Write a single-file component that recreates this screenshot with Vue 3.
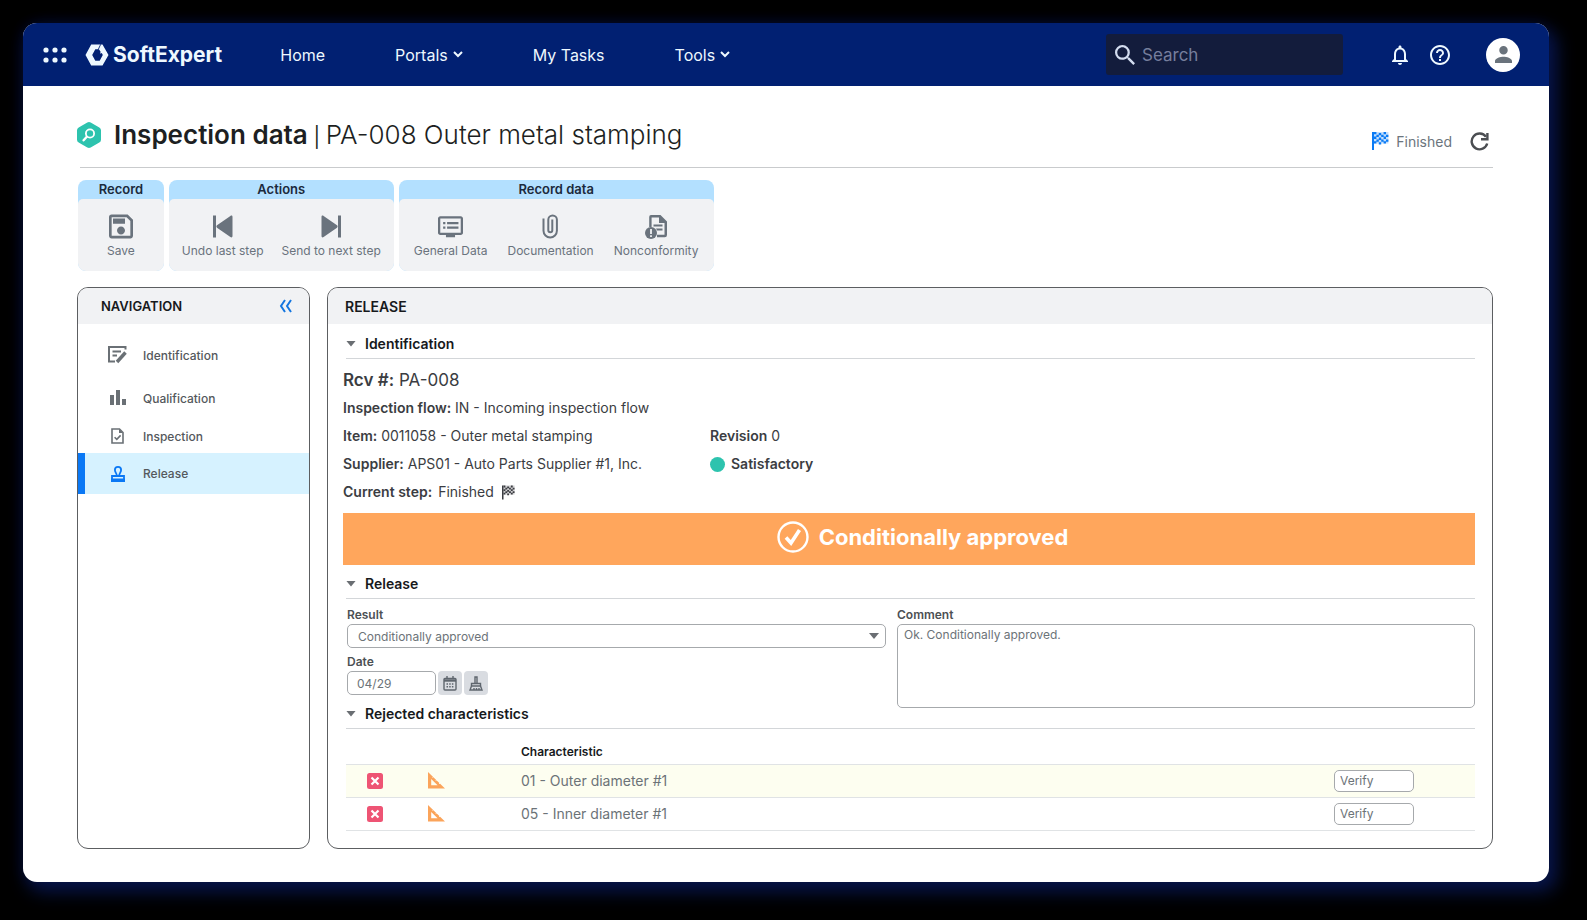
<script setup>
import { ref, reactive } from 'vue'

const result = ref('Conditionally approved')
const date = ref('04/29')
const comment = ref('Ok. Conditionally approved.')
const search = ref('')
const open = reactive({ identification: true, release: true, rejected: true })

const rows = reactive([
  { id: 1, name: '01 - Outer diameter #1', action: 'Verify' },
  { id: 2, name: '05 - Inner diameter #1', action: 'Verify' },
])

// Checkered flag: alternating cells with a small wave from column to column
const wave = [0, 0.5, 1, 0.5, 0, 0.5]
let flagCells = ''
for (let c = 0; c < 6; c++) {
  for (let r = 0; r < 5; r++) {
    if ((c + r) % 2 === 0) flagCells += `M${2 + c * 2.4} ${r * 2.3 + wave[c]}h2.4v2.3h-2.4z`
  }
}
</script>

<template>
  <div class="window">
    <header class="topbar">
      <button class="icon-btn apps" aria-label="Applications">
        <svg width="24" height="16" viewBox="0 0 24 16" fill="currentColor">
          <circle cx="3" cy="3" r="2.6" /><circle cx="12" cy="3" r="2.6" /><circle cx="21" cy="3" r="2.6" />
          <circle cx="3" cy="13" r="2.6" /><circle cx="12" cy="13" r="2.6" /><circle cx="21" cy="13" r="2.6" />
        </svg>
      </button>
      <a class="brand" href="#">
        <svg width="24" height="22" viewBox="0 0 24 22">
          <path fill="currentColor" fill-rule="evenodd" d="M6.200.5h11.300L23.500 11l-6 10.500H6.200L.5 11zM10.300 5.300 7.200 11l3.100 5.700h4.400L17.800 11l-1-2-1.500.8.200-2.300-1.600-2.200z" />
          <path d="M13.200 5.600 15.700.3" stroke="#012072" stroke-width=".9" />
        </svg>
        <span>SoftExpert</span>
      </a>
      <nav class="menu" aria-label="Main">
        <a href="#">Home</a>
        <a href="#">Portals
          <svg width="10" height="7" viewBox="0 0 10 7"><path d="M1 1l4 4 4-4" /></svg>
        </a>
        <a href="#">My Tasks</a>
        <a href="#">Tools
          <svg width="10" height="7" viewBox="0 0 10 7"><path d="M1 1l4 4 4-4" /></svg>
        </a>
      </nav>
      <label class="search">
        <svg width="20" height="20" viewBox="3 3 17.500 17.500" fill="currentColor">
          <path d="M15.500 14h-.79l-.28-.27A6.471 6.471 0 0 0 16 9.500 6.500 6.500 0 1 0 9.500 16c1.610 0 3.090-.59 4.230-1.570l.27.28v.79l5 4.990L20.490 19l-4.990-5zm-6 0C7.010 14 5 11.990 5 9.500S7.010 5 9.500 5 14 7.010 14 9.500 11.990 14 9.500 14z" />
        </svg>
        <input v-model="search" type="text" placeholder="Search" aria-label="Search" />
      </label>
      <button class="icon-btn bell" aria-label="Notifications">
        <svg width="16" height="20" viewBox="4 2 16 20" fill="currentColor">
          <path d="M12 22c1.100 0 2-.9 2-2h-4c0 1.100.9 2 2 2zm6-6v-5c0-3.070-1.630-5.640-4.500-6.320V4c0-.83-.67-1.500-1.500-1.500s-1.500.67-1.500 1.500v.68C7.640 5.360 6 7.920 6 11v5l-2 2v1h16v-1l-2-2zm-2 1H8v-6c0-2.480 1.510-4.500 4-4.500s4 2.020 4 4.500v6z" />
        </svg>
      </button>
      <button class="icon-btn help" aria-label="Help">
        <svg width="20" height="20" viewBox="2 2 20 20" fill="currentColor">
          <path d="M11 18h2v-2h-2v2zm1-16C6.480 2 2 6.480 2 12s4.480 10 10 10 10-4.480 10-10S17.520 2 12 2zm0 18c-4.410 0-8-3.590-8-8s3.590-8 8-8 8 3.590 8 8-3.590 8-8 8zm0-14c-2.210 0-4 1.790-4 4h2c0-1.100.9-2 2-2s2 .9 2 2c0 2-3 1.750-3 5h2c0-2.250 3-2.500 3-5 0-2.210-1.790-4-4-4z" />
        </svg>
      </button>
      <button class="icon-btn avatar" aria-label="Account">
        <svg width="17" height="17" viewBox="4 4 16 16" fill="currentColor">
          <path d="M12 12c2.210 0 4-1.790 4-4s-1.790-4-4-4-4 1.790-4 4 1.790 4 4 4zm0 2c-2.670 0-8 1.340-8 4v2h16v-2c0-2.660-5.330-4-8-4z" />
        </svg>
      </button>
    </header>

    <main class="page">
      <div class="title-row">
        <svg class="title-icon" width="24" height="26" viewBox="0 0 24 26">
          <path d="M10.300.6a3.400 3.400 0 0 1 3.400 0l8.600 4.900A3.300 3.300 0 0 1 24 8.400v9.200a3.300 3.300 0 0 1-1.700 2.900l-8.600 4.900a3.400 3.400 0 0 1-3.400 0l-8.600-4.900A3.300 3.300 0 0 1 0 17.600V8.400a3.300 3.300 0 0 1 1.700-2.900z" fill="#2dc3ae" />
          <circle cx="13" cy="11.500" r="4.100" fill="none" stroke="#fff" stroke-width="1.800" />
          <path d="M9.800 14.800 6.600 18.300" stroke="#fff" stroke-width="2.400" stroke-linecap="round" />
        </svg>
        <h1><b>Inspection data</b><span class="bar"> | </span>PA-008 Outer metal stamping</h1>
        <div class="status">
          <svg class="flag" width="17" height="18" viewBox="0 0 17 18" fill="currentColor">
            <path d="M0 0h2v18H0z" />
            <path d="M2 0h14.400v11.500H2z" opacity=".25" />
            <path :d="flagCells" />
          </svg>
          <span>Finished</span>
          <button class="icon-btn refresh" aria-label="Refresh">
            <svg width="19" height="19" viewBox="0 0 19 19" fill="none" stroke="currentColor" stroke-width="2.400">
              <path d="M16 4.800A7.900 7.900 0 1 0 17.200 11.500" />
              <path d="M17.400 1v6.300H11" />
            </svg>
          </button>
        </div>
      </div>

      <div class="toolbar">
        <section class="tools">
          <h2>Record</h2>
          <div class="tools-body single">
            <button>
              <svg width="24" height="24" viewBox="3 3 18 18" fill="currentColor">
                <path d="M17 3H5a2 2 0 0 0-2 2v14c0 1.100.9 2 2 2h14c1.100 0 2-.9 2-2V7l-4-4zm2 16H5V5h11.170L19 7.830V19zM12 12c-1.660 0-3 1.340-3 3s1.340 3 3 3 3-1.340 3-3-1.340-3-3-3zM6 6h9v4H6z" />
              </svg>
              Save
            </button>
          </div>
        </section>
        <section class="tools">
          <h2>Actions</h2>
          <div class="tools-body">
            <button>
              <svg width="20" height="24" viewBox="0 0 20 24" fill="currentColor">
                <path d="M0 1h3v22H0z" />
                <path d="M17.400 1.500c1-.8 2.100-.4 2.100.9v19.200c0 1.300-1.100 1.700-2.100.9L4 13.200c-.8-.7-.8-1.700 0-2.400z" />
              </svg>
              Undo last step
            </button>
            <button>
              <svg width="20" height="24" viewBox="0 0 20 24" fill="currentColor">
                <path d="M17 1h3v22h-3z" />
                <path d="M2.600 1.500C1.600.7.500 1.100.5 2.400v19.200c0 1.300 1.100 1.700 2.100.9L16 13.200c.8-.7.8-1.700 0-2.400z" />
              </svg>
              Send to next step
            </button>
          </div>
        </section>
        <section class="tools">
          <h2>Record data</h2>
          <div class="tools-body spacious">
            <button>
              <svg width="25" height="24" viewBox="1 1 22 21" fill="currentColor">
                <path d="M21 2.500H3c-1.100 0-2 .9-2 2v12.500c0 1.100.9 2 2 2h5v2h8v-2h5c1.100 0 2-.9 2-2V4.500c0-1.100-.9-2-2-2zM21 17H3V4.500h18zM19 7.500H9v2h10zm0 4H9v2h10zM7.500 7.500h-2v2h2zm0 4h-2v2h2z" />
              </svg>
              General Data
            </button>
            <button>
              <svg width="17" height="24" viewBox="0 0 17 24" fill="none" stroke="currentColor" stroke-width="2">
                <path d="M1.500 4v12.200a6.700 6.700 0 0 0 13.400 0V5.300a4.300 4.300 0 0 0-8.600 0v10.400a2 2 0 0 0 4 0V5" />
              </svg>
              Documentation
            </button>
            <button>
              <svg width="22" height="25" viewBox="0 0 22 25" fill="currentColor">
                <path fill-rule="evenodd" d="M6 1h9.500L22 7.500V21a2.200 2.200 0 0 1-2.200 2.200H12v-2.400h7.500V9H14V3.400H6.600V13H4.200V3A2 2 0 0 1 6 1z" />
                <path d="M8.500 10.500h9v2h-9zM11 14.500h6.500v2H12z" />
                <circle cx="6" cy="19" r="6" />
                <path d="M5.100 15h1.800v5H5.100zM5.100 21.200h1.800v1.800H5.100z" fill="#f1f2f4" />
              </svg>
              Nonconformity
            </button>
          </div>
        </section>
      </div>

      <div class="panels">
        <aside class="panel">
          <div class="panel-head nav-head">
            <h2>NAVIGATION</h2>
            <button class="icon-btn collapse" aria-label="Collapse navigation">
              <svg width="14" height="14" viewBox="0 0 14 14" fill="none" stroke="currentColor" stroke-width="2">
                <path d="M6 1 2 7l4 6M12 1 8 7l4 6" />
              </svg>
            </button>
          </div>
          <ul class="nav-list">
            <li>
              <a href="#">
                <svg width="19" height="18" viewBox="0 0 19 18" fill="none" stroke="currentColor" stroke-width="2">
                  <path d="M1 16.500V1h16.500v2.500M0 15.500h7M4.500 5.500h8.500M4.500 9.500H9" />
                  <path d="M9 16 17.500 6.500" stroke-width="3.400" />
                </svg>
                Identification
              </a>
            </li>
            <li>
              <a href="#">
                <svg width="16" height="16" viewBox="0 0 16 16" fill="currentColor">
                  <path d="M0 5h4v10H0zM6 0h4v15H6zM12 9h4v6h-4z" />
                </svg>
                Qualification
              </a>
            </li>
            <li>
              <a href="#">
                <svg width="13" height="16" viewBox="0 0 13 16" fill="none" stroke="currentColor" stroke-width="1.600">
                  <path d="M1 1h7.500L12 4.500V15H1zM3.600 9.200l2.200 2.200 3.800-4" />
                  <path d="M8 1v4h4z" fill="currentColor" stroke="none" />
                </svg>
                Inspection
              </a>
            </li>
            <li>
              <a href="#" class="active" aria-current="page">
                <svg width="14" height="16" viewBox="0 0 14 16" fill="none" stroke="currentColor" stroke-width="1.800">
                  <path d="M5.800 9.500C5.800 7.400 3.900 6.300 3.900 4a3.100 3.100 0 0 1 6.200 0C10.100 6.300 8.200 7.400 8.200 9.500" />
                  <path d="M1 13V10h12v3" />
                  <path d="M0 12.500h14v3.500H0z" fill="currentColor" stroke="none" />
                </svg>
                Release
              </a>
            </li>
          </ul>
        </aside>

        <section class="panel">
          <div class="panel-head">
            <h2>RELEASE</h2>
          </div>
          <div class="panel-body">
            <h3>
              <button @click="open.identification = !open.identification"><i class="caret"></i>Identification</button>
            </h3>
            <div v-show="open.identification" class="facts">
              <p class="lead"><b>Rcv #:</b> PA-008</p>
              <p class="full"><b>Inspection flow:</b> IN - Incoming inspection flow</p>
              <p><b>Item:</b> 0011058 - Outer metal stamping</p>
              <p><b>Revision</b> 0</p>
              <p><b>Supplier:</b> APS01 - Auto Parts Supplier #1, Inc.</p>
              <p class="with-dot"><i class="dot"></i><b>Satisfactory</b></p>
              <p class="with-flag">
                <b>Current step:</b>
                <span>Finished</span>
                <svg width="13" height="15" viewBox="0 0 17 18" fill="currentColor">
                  <path d="M0 0h2v18H0z" />
                  <path d="M2 0h14.400v11.500H2z" opacity=".25" />
                  <path :d="flagCells" />
                </svg>
              </p>
            </div>

            <div class="banner">
              <svg width="32" height="32" viewBox="0 0 32 32" fill="none" stroke="currentColor">
                <circle cx="16" cy="16" r="14.500" stroke-width="2.400" />
                <path d="M9 16.500 14 22l8.500-13" stroke-width="3.600" />
              </svg>
              <strong>Conditionally approved</strong>
            </div>

            <h3>
              <button @click="open.release = !open.release"><i class="caret"></i>Release</button>
            </h3>
            <form v-show="open.release" class="form" @submit.prevent>
              <div class="left">
                <div class="field">
                  <label for="result">Result</label>
                  <div class="select">
                    <select id="result" v-model="result">
                      <option>Conditionally approved</option>
                      <option>Approved</option>
                      <option>Rejected</option>
                    </select>
                    <i class="caret"></i>
                  </div>
                </div>
                <div class="field">
                  <label for="date">Date</label>
                  <div class="date">
                    <input id="date" v-model="date" type="text" />
                    <button type="button" aria-label="Open calendar">
                      <svg width="14" height="15" viewBox="0 0 14 15" fill="none" stroke="currentColor" stroke-width="1.400">
                        <rect x="1" y="2.500" width="12" height="11.500" rx="1" />
                        <path d="M1 4.500h12" stroke-width="2.400" />
                        <path d="M4 0v3M10 0v3" />
                        <path d="M3.500 8h7M3.500 10.800h7" stroke-dasharray="1.500 1.200" />
                      </svg>
                    </button>
                    <button type="button" aria-label="Clear date">
                      <svg width="14" height="15" viewBox="0 0 14 15" fill="none" stroke="currentColor" stroke-width="1.400">
                        <path d="M6 7V1h2v6M2.500 10V7.500h9V10" />
                        <path d="M2.500 10 1 14h12l-1.500-4zM5 14v-2M7.500 14v-2M10 14v-2" />
                      </svg>
                    </button>
                  </div>
                </div>
              </div>
              <div class="field">
                <label for="comment">Comment</label>
                <textarea id="comment" v-model="comment"></textarea>
              </div>
            </form>

            <h3>
              <button @click="open.rejected = !open.rejected"><i class="caret"></i>Rejected characteristics</button>
            </h3>
            <table v-show="open.rejected">
              <colgroup>
                <col class="c-state" /><col class="c-type" /><col /><col class="c-action" />
              </colgroup>
              <thead>
                <tr>
                  <td></td>
                  <td></td>
                  <th scope="col">Characteristic</th>
                  <td></td>
                </tr>
              </thead>
              <tbody>
                <tr v-for="row in rows" :key="row.id">
                  <td class="state">
                    <svg width="16" height="16" viewBox="0 0 16 16" role="img" aria-label="Rejected">
                      <rect width="16" height="16" rx="2.500" fill="#ee5474" />
                      <path d="M4.500 4.500l7 7M11.500 4.500l-7 7" stroke="#fff" stroke-width="2.200" />
                    </svg>
                  </td>
                  <td>
                    <svg width="18" height="17" viewBox="0 0 18 17" role="img" aria-label="Measured">
                      <path fill="#fba45a" fill-rule="evenodd" d="M1 0 18 16.500H1zM4.200 7v6.300h6.400z" />
                      <path d="M7 4.200 5.600 5.600M10.200 7.400 8.800 8.800M13.400 10.600 12 12" stroke="#fff" stroke-width=".8" />
                    </svg>
                  </td>
                  <td>{{ row.name }}</td>
                  <td><input v-model="row.action" type="text" :aria-label="'Action for ' + row.name" /></td>
                </tr>
              </tbody>
            </table>
          </div>
        </section>
      </div>
    </main>
  </div>
</template>

<style>
body {
  background: #000;
}
</style>

<style scoped>
* {
  box-sizing: border-box;
}

.window {
  display: flex;
  flex-direction: column;
  min-height: calc(100vh - 61px);
  margin: 23px 38px 38px 23px;
  border-radius: 14px;
  background: #fff;
  color: #3b3d42;
  font-family: Inter, "Liberation Sans", sans-serif;
  font-size: 14px;
  box-shadow: 6px 8px 18px 2px #07154a, 0 0 16px #05081f;
  overflow: hidden;
}

h1, h2, h3, p, ul {
  margin: 0;
  padding: 0;
  font-weight: 400;
}

button, input, select, textarea {
  margin: 0;
  padding: 0;
  border: 0;
  background: none;
  color: inherit;
  font: inherit;
}

svg {
  flex: none;
  display: block;
}

a {
  color: inherit;
  text-decoration: none;
}

b {
  font-weight: 600;
}

.icon-btn {
  display: flex;
  align-items: center;
  justify-content: center;
}

/* Top bar */
.topbar {
  display: flex;
  align-items: center;
  height: 63px;
  padding: 0 29px 0 20px;
  background: #012072;
  color: #eef8ff;
}

.brand {
  display: flex;
  align-items: center;
  gap: 4px;
  margin-left: 18px;
  font-size: 21px;
  font-weight: 700;
}

.menu {
  display: flex;
  gap: 70px;
  margin-left: 58px;
  font-size: 16px;
}

.menu a {
  display: flex;
  align-items: center;
  gap: 5px;
  white-space: nowrap;
}

.menu svg {
  fill: none;
  stroke: currentColor;
  stroke-width: 2;
}

.search {
  display: flex;
  align-items: center;
  gap: 7px;
  width: 237px;
  height: 41px;
  margin-left: auto;
  padding: 0 9px;
  border-radius: 3px;
  background: #131c3c;
  color: #d3dcef;
}

.search input {
  flex: 1;
  min-width: 0;
  outline: 0;
  font-size: 17px;
}

.search input::placeholder {
  color: #767e9c;
  opacity: 1;
}

.bell {
  margin-left: 49px;
}

.help {
  margin-left: 22px;
}

.avatar {
  width: 34px;
  height: 34px;
  margin-left: 36px;
  border-radius: 50%;
  background: #fff;
  color: #6a737c;
}

/* Page */
.page {
  flex: 1;
  display: flex;
  flex-direction: column;
  padding: 0 56px 33px 54px;
}

.title-row {
  display: flex;
  align-items: center;
  height: 82px;
  padding-top: 15px;
  background: linear-gradient(#c9cbcd, #c9cbcd) 3px 100% / 100% 1px no-repeat;
}

h1 {
  margin-left: 13px;
  color: #1d1f22;
  font-size: 26px;
  font-weight: 300;
  white-space: nowrap;
}

.bar {
  font-size: 20px;
  font-weight: 400;
}

.status {
  display: flex;
  align-items: center;
  margin-left: auto;
  padding: 13px 4px 0 0;
  color: #6c757d;
  font-size: 14px;
}

.flag {
  margin-right: 7px;
  color: #0a7bf5;
}

.refresh {
  margin-left: 18px;
  color: #4b4e52;
}

.toolbar {
  display: flex;
  gap: 5px;
  padding: 12px 0 16px 1px;
}

.tools {
  border-radius: 8px;
  background: #b3e0ff;
  overflow: hidden;
}

.tools h2 {
  color: #1b2a3c;
  font-size: 13px;
  font-weight: 600;
  line-height: 19px;
  text-align: center;
}

.tools-body {
  display: flex;
  gap: 18px;
  height: 72px;
  padding: 15px 13px 0;
  border-radius: 5px 5px 0 0;
  background: #f1f2f4;
  color: #6a737d;
}

.single {
  padding: 15px 29px 0;
}

.spacious {
  gap: 20px;
  padding: 15px 15px 0;
}

.tools-body button {
  display: flex;
  flex-direction: column;
  align-items: center;
  gap: 4px;
  font-size: 12px;
  line-height: 16px;
  white-space: nowrap;
}

.tools-body svg {
  height: 25px;
}

/* Panels */
.panels {
  flex: 1;
  display: grid;
  grid-template-columns: 233px minmax(0, 1fr);
  gap: 17px;
}

.panel {
  border: 1px solid #5c5e61;
  border-radius: 11px;
  overflow: hidden;
}

.panel-head {
  display: flex;
  align-items: center;
  height: 36px;
  padding: 0 17px;
  background: #f1f2f4;
}

.panel-head h2 {
  color: #17191c;
  font-size: 14px;
  font-weight: 600;
}

.panel-head.nav-head {
  padding: 0 16px 0 23px;
}

.panel-head.nav-head h2 {
  font-size: 13px;
}

.collapse {
  margin-left: auto;
  color: #1677e0;
}

.nav-list {
  display: grid;
  grid-template-rows: 44px 42px 34px 41px;
  padding-top: 9px;
  list-style: none;
}

.nav-list a {
  display: grid;
  grid-template-columns: 19px 1fr;
  align-items: center;
  justify-items: start;
  column-gap: 16px;
  height: 100%;
  padding-left: 30px;
  color: #54585c;
  font-size: 12px;
  font-weight: 500;
}

.nav-list svg {
  justify-self: center;
  color: #6a7075;
}

.nav-list .active {
  padding-left: 23px;
  border-left: 7px solid #0a78f5;
  background: #d6f2ff;
}

.nav-list .active svg {
  color: #0a78f5;
}

.panel-body {
  padding: 1px 17px 17px 15px;
}

h3 {
  height: 34px;
  margin-left: 3px;
  padding-top: 4px;
  border-bottom: 1px solid #d3d6d9;
}

h3 button {
  display: flex;
  align-items: center;
  gap: 9px;
  height: 100%;
  color: #17191c;
  font-size: 14px;
  font-weight: 600;
}

.caret {
  width: 10px;
  height: 6px;
  background: #6a6e73;
  clip-path: polygon(0 0, 100% 0, 50% 100%);
}

.facts {
  display: grid;
  grid-template-columns: 367px 1fr;
  padding: 7px 0;
  line-height: 28px;
}

.lead, .full {
  grid-column: 1 / -1;
}

.lead {
  font-size: 17px;
}

.with-dot, .with-flag {
  display: flex;
  align-items: center;
  gap: 6px;
}

.with-flag svg {
  margin-left: 2px;
}

.dot {
  width: 15px;
  height: 15px;
  border-radius: 50%;
  background: #2dc3ae;
}

.banner {
  display: flex;
  align-items: center;
  justify-content: center;
  gap: 10px;
  height: 52px;
  padding: 0 0 4px 27px;
  background: #ffa65c;
  color: #fff;
  font-size: 22px;
}

.banner strong {
  font-weight: 700;
}

.form {
  display: grid;
  grid-template-columns: 539fr 578fr;
  gap: 11px;
  margin-left: 4px;
  padding-top: 8px;
  color: #6c7378;
  font-size: 12px;
}

.left {
  display: grid;
  gap: 6px;
}

.field {
  display: flex;
  flex-direction: column;
  gap: 1px;
}

.field label {
  color: #4c5054;
  font-weight: 600;
  line-height: 16px;
}

.select {
  position: relative;
}

.select .caret {
  position: absolute;
  top: 9px;
  right: 7px;
  pointer-events: none;
}

.form select, .form input, .form textarea, td input {
  border: 1px solid #a6a9ac;
  border-radius: 5px;
  background: #fff;
}

.form select {
  width: 100%;
  height: 24px;
  padding: 0 10px;
  appearance: none;
}

.date {
  display: flex;
  gap: 2px;
}

.date input {
  width: 89px;
  height: 24px;
  padding: 0 9px;
}

.date button {
  display: flex;
  align-items: center;
  justify-content: center;
  width: 24px;
  height: 24px;
  border-radius: 4px;
  background: #d9dce1;
  color: #5f666e;
}

.form textarea {
  height: 84px;
  margin-bottom: -13px;
  padding: 2px 6px;
  line-height: 16px;
  resize: none;
}

table {
  width: calc(100% - 3px);
  margin-left: 3px;
  border-collapse: collapse;
  table-layout: fixed;
  color: #6c7378;
}

.c-state {
  width: 81px;
}

.c-type {
  width: 94px;
}

.c-action {
  width: 141px;
}

tr {
  height: 33px;
  border-bottom: 1px solid #e0e3e5;
}

thead tr {
  height: 35px;
}

td, th {
  padding: 0;
  text-align: left;
}

th {
  padding-top: 10px;
  color: #17191c;
  font-size: 12px;
  font-weight: 600;
}

tbody tr:first-child {
  background: #fdfef0;
}

.state {
  padding-left: 21px;
}

td input {
  display: block;
  width: 80px;
  height: 22px;
  padding: 0 5px;
  font-size: 12px;
}
</style>
